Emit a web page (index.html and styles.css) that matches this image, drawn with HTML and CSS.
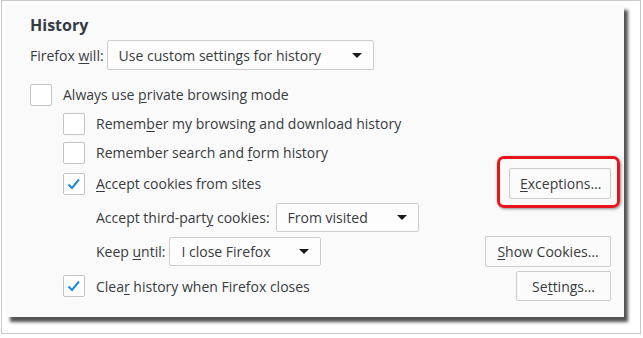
FILE: index.html
```html
<!DOCTYPE html>
<html lang="en">
<head>
	<meta charset="UTF-8">
	<title>History preferences</title>
	<link rel="stylesheet" href="styles.css">
</head>
<body>
	<div class="frame">
		<div class="panel">
			<!-- Section heading -->
			<div class="heading">History</div>

			<div class="row will-row">
				<span class="label">Firefox <u>w</u>ill:</span>
				<div class="select select-mode">
					<span>Use custom settings for history</span>
					<span class="arrow"></span>
				</div>
			</div>

			<div class="row check-row first-check">
				<span class="box"></span>
				<span class="label">Always use <u>p</u>rivate browsing mode</span>
			</div>

			<div class="indent">
				<div class="row check-row">
					<span class="box"></span>
					<span class="label">Remem<u>b</u>er my browsing and download history</span>
				</div>

				<div class="row check-row">
					<span class="box"></span>
					<span class="label">Remember search and <u>f</u>orm history</span>
				</div>

				<div class="row button-row cookies-row">
					<span class="box checked">
						<svg width="14" height="12" viewBox="0 0 14 12"><polyline points="1.5,6.5 5,10 12,1.5" fill="none" stroke="#1e8ad6" stroke-width="2"/></svg>
					</span>
					<span class="label"><u>A</u>ccept cookies from sites</span>
					<div class="button-wrap">
						<button class="btn btn-exceptions"><u>E</u>xceptions…</button>
						<span class="highlight"></span>
					</div>
				</div>

				<div class="sub">
					<div class="row third-row">
						<span class="label">Accept third-part<u>y</u> cookies:</span>
						<div class="select select-third">
							<span>From visited</span>
							<span class="arrow"></span>
						</div>
					</div>

					<div class="row button-row keep-row">
						<span class="label">Keep <u>u</u>ntil:</span>
						<div class="select select-keep">
							<span>I close Firefox</span>
							<span class="arrow"></span>
						</div>
						<button class="btn btn-show"><u>S</u>how Cookies…</button>
					</div>
				</div>

				<div class="row button-row clear-row">
					<span class="box checked">
						<svg width="14" height="12" viewBox="0 0 14 12"><polyline points="1.5,6.5 5,10 12,1.5" fill="none" stroke="#1e8ad6" stroke-width="2"/></svg>
					</span>
					<span class="label">Clea<u>r</u> history when Firefox closes</span>
					<button class="btn btn-settings">Se<u>t</u>tings…</button>
				</div>
			</div>
		</div>
	</div>
</body>
</html>
```

FILE: styles.css
```css
body {
	margin: 0;
	background-color: #ffffff;
	font-family: "Open Sans", "Noto Sans", sans-serif;
	font-size: 14px;
	color: #383b40;
}

.frame {
	margin-left: 1px;
	width: 640px;
	height: 334px;
	border: 1px solid #c9c9c9;
	background-color: #ffffff;
	padding: 4px 0 0 4px;
	box-sizing: border-box;
}

.panel {
	width: 618px;
	height: 312px;
	background-color: #fafafa;
	box-shadow: 4px 5px 3px rgba(40, 40, 40, 0.8);
	padding: 7px 13px 0 24px;
	box-sizing: border-box;
}

.heading {
	height: 26px;
	line-height: 26px;
	font-size: 16px;
	font-weight: bold;
	color: #363b48;
}

.row {
	display: flex;
	align-items: center;
}

.will-row {
	margin-top: 2px;
	height: 30px;
}

.label {
	white-space: nowrap;
}

u {
	text-decoration-thickness: 1px;
	text-underline-offset: 2px;
}

.select {
	display: flex;
	align-items: center;
	justify-content: space-between;
	height: 30px;
	box-sizing: border-box;
	border: 1px solid #cdcdcd;
	border-radius: 2px;
	background-color: #fdfdfd;
	padding: 0 11px;
	margin-left: 4px;
}

.select-mode {
	width: 267px;
	margin-left: 3px;
}

.select-third {
	width: 143px;
	height: 29px;
	margin-left: 6px;
}

.select-keep {
	width: 152px;
	height: 29px;
}

.arrow {
	width: 0;
	height: 0;
	border-left: 5px solid transparent;
	border-right: 5px solid transparent;
	border-top: 5px solid #1a1a1a;
}

.check-row {
	height: 23px;
	margin-top: 6px;
}

.first-check {
	margin-top: 13px;
}

.box {
	width: 22px;
	height: 22px;
	box-sizing: border-box;
	border: 1px solid #c4c4c4;
	border-radius: 2px;
	background-color: #ffffff;
	margin-right: 11px;
	flex-shrink: 0;
	display: flex;
	align-items: center;
	justify-content: center;
}

.indent {
	padding-left: 33px;
}

.button-row {
	margin-top: 4px;
	height: 31px;
}

.clear-row {
	height: 30px;
}

.sub {
	padding-left: 33px;
}

.third-row {
	margin-top: 4px;
	height: 29px;
}

.btn {
	font-family: inherit;
	font-size: 14px;
	color: #383b40;
	height: 31px;
	box-sizing: border-box;
	border: 1px solid #cbcbcb;
	border-radius: 2px;
	background-color: #fbfbfb;
	padding: 0 10px;
}

.button-wrap {
	position: relative;
	margin-left: auto;
}

.btn-exceptions {
	width: 102px;
	display: block;
}

.highlight {
	position: absolute;
	left: -12px;
	top: -12px;
	right: -9px;
	bottom: -9px;
	border: 3px solid #e8141b;
	border-radius: 7px;
	box-shadow: 1px 1px 3px rgba(0, 0, 0, 0.45);
}

.btn-show {
	margin-left: auto;
	width: 126px;
}

.btn-settings {
	margin-left: auto;
	width: 95px;
	height: 30px;
}
```
